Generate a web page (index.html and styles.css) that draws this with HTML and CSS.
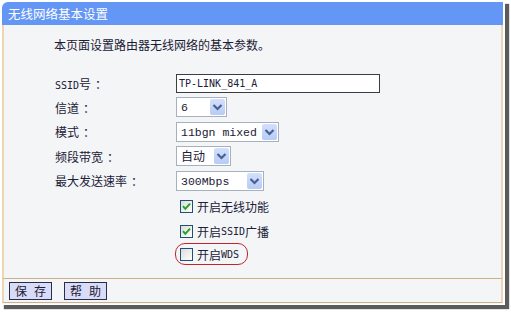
FILE: index.html
```html
<!DOCTYPE html>
<html lang="zh-CN">
<head>
<meta charset="utf-8">
<title>无线网络基本设置</title>
<link rel="stylesheet" href="styles.css">
</head>
<body>
<div class="frame">
  <div class="panel">
    <div class="title">无线网络基本设置</div>
    <div class="content">
      <div class="intro">本页面设置路由器无线网络的基本参数。</div>
      <div class="row r1">
        <div class="label"><span class="m">SSID</span>号<span class="c">：</span></div>
        <div class="input"><span class="m">TP-LINK_841_A</span></div>
      </div>
      <div class="row r2">
        <div class="label">信道<span class="c">：</span></div>
        <div class="select w-ch"><span class="val"><span class="ms">6</span></span><span class="arrow"><svg width="15" height="16" viewBox="0 0 15 16"><path d="M3.5 6 L7.5 10 L11.5 6" fill="none" stroke="#47618f" stroke-width="2.2"/></svg></span></div>
      </div>
      <div class="row r3">
        <div class="label">模式<span class="c">：</span></div>
        <div class="select w-mode"><span class="val"><span class="ms">11bgn mixed</span></span><span class="arrow"><svg width="15" height="16" viewBox="0 0 15 16"><path d="M3.5 6 L7.5 10 L11.5 6" fill="none" stroke="#47618f" stroke-width="2.2"/></svg></span></div>
      </div>
      <div class="row r4">
        <div class="label">频段带宽<span class="c">：</span></div>
        <div class="select w-band"><span class="val">自动</span><span class="arrow"><svg width="15" height="16" viewBox="0 0 15 16"><path d="M3.5 6 L7.5 10 L11.5 6" fill="none" stroke="#47618f" stroke-width="2.2"/></svg></span></div>
      </div>
      <div class="row r5">
        <div class="label">最大发送速率<span class="c">：</span></div>
        <div class="select w-rate"><span class="val"><span class="ms">300Mbps</span></span><span class="arrow"><svg width="15" height="16" viewBox="0 0 15 16"><path d="M3.5 6 L7.5 10 L11.5 6" fill="none" stroke="#47618f" stroke-width="2.2"/></svg></span></div>
      </div>
      <div class="row r6">
        <div class="label"></div>
        <div class="check"><span class="box on"><svg width="11" height="11" viewBox="0 0 11 11"><path d="M2 5.2 L4.3 7.8 L9 2.6" fill="none" stroke="#22a32a" stroke-width="2"/></svg></span>开启无线功能</div>
      </div>
      <div class="row r7">
        <div class="label"></div>
        <div class="check"><span class="box on"><svg width="11" height="11" viewBox="0 0 11 11"><path d="M2 5.2 L4.3 7.8 L9 2.6" fill="none" stroke="#22a32a" stroke-width="2"/></svg></span>开启<span class="m">SSID</span>广播</div>
      </div>
      <div class="row r8">
        <div class="label"></div>
        <div class="check marked"><span class="box"></span>开启<span class="m">WDS</span></div>
      </div>
    </div>
    <div class="footer">
      <button class="btn"><span>保</span><span>存</span></button>
      <button class="btn"><span>帮</span><span>助</span></button>
    </div>
  </div>
</div>
</body>
</html>
```
FILE: styles.css
```css
html, body {
  margin: 0;
  padding: 0;
  background: #ffffff;
}
body {
  width: 511px;
  height: 313px;
  overflow: hidden;
  font-family: "Noto Sans CJK SC", "Noto Sans", sans-serif;
  font-size: 12px;
  color: #1a2036;
}
.frame {
  width: 502px;
  height: 303px;
  padding: 2px 1px 0 2px;
  background: #ffffff;
  box-shadow: 4px 4px 1px rgba(50, 50, 50, 0.8);
}
.panel {
  width: 501px;
  height: 302px;
  display: flex;
  flex-direction: column;
  border-radius: 6px 0 0 0;
  overflow: hidden;
  background: #f4f5f6;
}
.title {
  height: 23px;
  flex: none;
  background: #6496f6;
  color: #ffffff;
  font-size: 12.5px;
  line-height: 23px;
  padding-left: 6px;
}
.content {
  flex: none;
  height: 254px;
  box-sizing: border-box;
  border-left: 2px solid #eed6b4;
  border-right: 2px solid #eed6b4;
  border-bottom: 1px solid #cdb08a;
  padding-left: 50px;
  display: flex;
  flex-direction: column;
}
.intro {
  height: 20px;
  line-height: 20px;
  margin-top: 10px;
  margin-bottom: 17px;
}
.row {
  display: flex;
  align-items: center;
}
.r1 { height: 23px; }
.r2 { height: 24px; }
.r3 { height: 25px; }
.r4 { height: 24px; }
.r5 { height: 25px; }
.r6 { height: 26px; }
.r7 { height: 24px; }
.r8 { height: 22px; }
.label {
  width: 121px;
  flex: none;
  padding-left: 1px;
}
.c {
  display: inline-block;
  padding-left: 4px;
}
.m {
  font-family: "DejaVu Sans Mono", monospace;
  font-size: 10px;
}
.ms {
  font-family: "Liberation Mono", monospace;
  font-size: 11.5px;
}
.input {
  width: 200px;
  height: 17px;
  border: 1px solid #3a3d44;
  background: #ffffff;
  display: flex;
  align-items: center;
  padding-left: 2px;
  box-sizing: content-box;
}
.select {
  border: 1px solid #a7b0bd;
  background: #ffffff;
  display: flex;
  align-items: center;
  justify-content: space-between;
  box-sizing: border-box;
  padding: 0 1px 0 4px;
  height: 20px;
}
.w-ch { width: 51px; }
.w-mode { width: 103px; }
.w-band { width: 55px; }
.w-rate { width: 88px; }
.val {
  line-height: 16px;
}
.arrow {
  width: 15px;
  height: 16px;
  border-radius: 2px;
  background: linear-gradient(#d3e0fd, #b7cbf7);
  display: flex;
  align-items: center;
  justify-content: center;
}
.check {
  display: flex;
  align-items: center;
  height: 20px;
  padding: 0 4px 0 4px;
  border: 1px solid transparent;
  margin-left: -1px;
  border-radius: 10px;
}
.check.marked {
  border-color: #c2262c;
  padding-right: 8px;
}
.box {
  width: 11px;
  height: 11px;
  border: 1px solid #1f4f7a;
  background: linear-gradient(135deg, #dcdcd6, #ffffff);
  margin-right: 4px;
  display: flex;
  align-items: center;
  justify-content: center;
}
.footer {
  flex: none;
  height: 24px;
  box-sizing: border-box;
  border-left: 2px solid #eed6b4;
  border-right: 2px solid #eed6b4;
  border-bottom: 1px solid #cdb08a;
  display: flex;
  align-items: center;
  gap: 12px;
  padding-left: 5px;
}
.btn {
  width: 43px;
  height: 18px;
  padding: 0;
  border: 1px solid #2a2e4a;
  background: #d9dcf7;
  font-family: "Noto Sans CJK SC", sans-serif;
  font-size: 12px;
  color: #1a2036;
  line-height: 16px;
  display: flex;
  align-items: center;
  justify-content: center;
  gap: 7px;
  white-space: nowrap;
}
```
